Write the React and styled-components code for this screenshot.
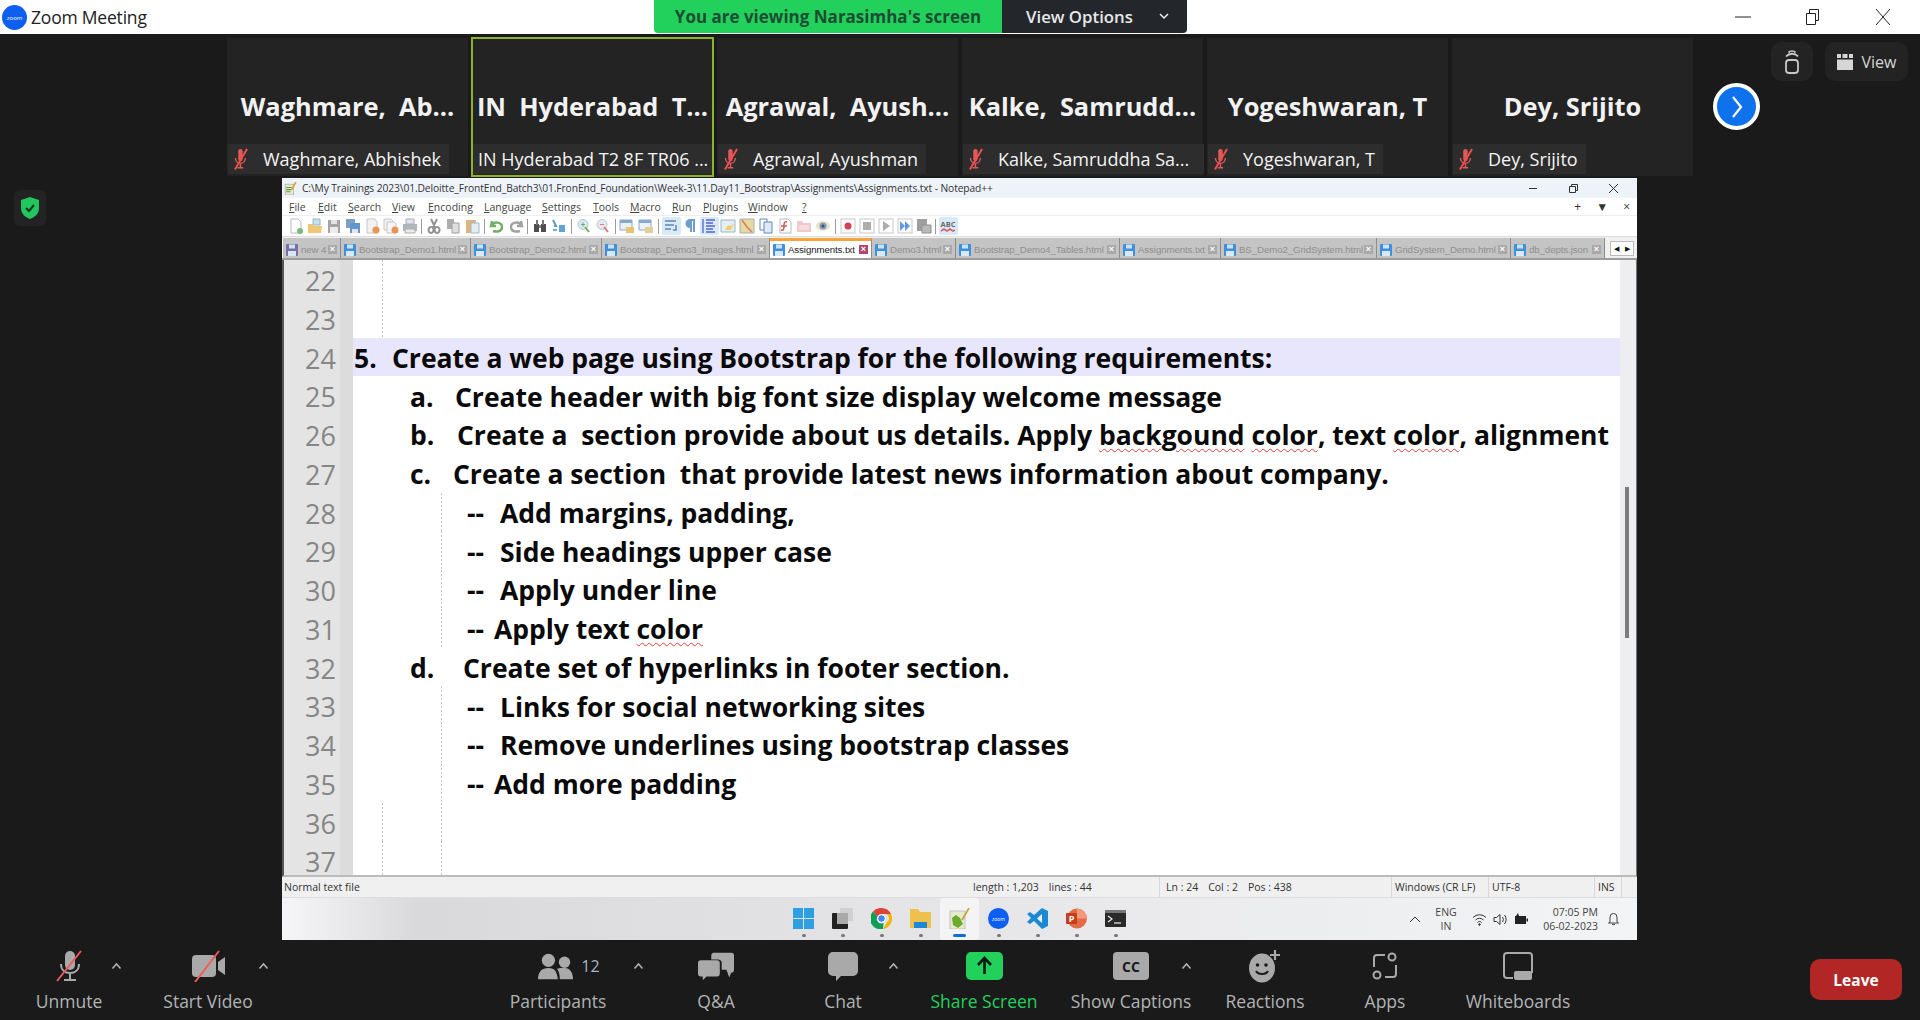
import React from 'react';
import styled, { createGlobalStyle } from 'styled-components';

const GlobalStyle = createGlobalStyle`
  html, body { margin: 0; padding: 0; background: #1a1a1a; }
  body { font-family: "Open Sans", "Noto Sans", sans-serif; overflow: hidden; }
  * { box-sizing: border-box; }
`;

const Page = styled.div`
  width: 1920px;
  height: 1020px;
  display: flex;
  flex-direction: column;
  background: #1a1a1a;
  position: relative;
  overflow: hidden;
`;

/* zoom title bar */
const TitleBar = styled.div`
  height: 34px;
  background: #fff;
  display: flex;
  align-items: center;
  padding-left: 2px;
  position: relative;
  flex: none;
`;
const AppName = styled.span`
  font-size: 17.5px;
  color: #222;
  margin-left: 4px;
  letter-spacing: -0.2px;
`;
const WinButtons = styled.div`
  margin-left: auto;
  display: flex;
  align-items: center;
  gap: 54px;
  padding-right: 29px;
`;
const Banner = styled.div`
  position: absolute;
  left: 654px;
  top: 0;
  height: 33px;
  display: flex;
  border-radius: 0 0 4px 4px;
  overflow: hidden;
`;
const BannerGreen = styled.div`
  width: 348px;
  background: #22d15c;
  color: #1d4d33;
  font-size: 17px;
  font-weight: 700;
  display: flex;
  align-items: center;
  justify-content: center;
`;
const BannerDark = styled.div`
  width: 185px;
  background: #23262b;
  color: #e8e8e8;
  font-size: 16.8px;
  font-weight: 600;
  display: flex;
  align-items: center;
  padding-left: 24px;
  gap: 26px;
`;

/* video strip */
const Strip = styled.div`
  height: 144px;
  flex: none;
  padding: 4px 0 2px 227px;
  display: flex;
  gap: 4px;
  position: relative;
`;
const Tile = styled.div`
  width: 241px;
  background: #232323;
  position: relative;
  display: flex;
  flex-direction: column;
  align-items: center;
  outline: ${(p) => (p.$active ? '2px solid #8db32c' : 'none')};
  outline-offset: -1px;
`;
const TileName = styled.div`
  flex: 1;
  display: flex;
  align-items: center;
  padding-top: 30px;
  color: #f2f2f2;
  font-size: 25.4px;
  font-weight: 700;
  white-space: pre;
`;
const NameTag = styled.div`
  align-self: flex-start;
  height: 30px;
  width: ${(p) => (p.$full ? '100%' : 'auto')};
  margin: 0 0 2px 1px;
  padding: 0 8px 0 5px;
  background: #2d2d2d;
  color: #f4f4f4;
  font-size: 18px;
  display: flex;
  align-items: center;
  gap: 14px;
  white-space: pre;
`;
const NextBtn = styled.div`
  width: 47px;
  height: 47px;
  border-radius: 50%;
  background: #0e72ed;
  border: 4px solid #fff;
  margin: 45px 0 0 16px;
  display: flex;
  align-items: center;
  justify-content: center;
`;
const ImmersiveBtn = styled.div`
  position: absolute;
  left: 1771px;
  top: 8px;
  width: 42px;
  height: 39px;
  border-radius: 10px;
  background: #232323;
  display: flex;
  align-items: center;
  justify-content: center;
`;
const ViewBtn = styled.div`
  position: absolute;
  left: 1825px;
  top: 8px;
  width: 83px;
  height: 39px;
  border-radius: 10px;
  background: #232323;
  color: #d6d6d6;
  font-size: 16px;
  display: flex;
  align-items: center;
  justify-content: center;
  gap: 9px;
`;

/* shared screen */
const Stage = styled.div`
  flex: 1;
  min-height: 0;
  padding-left: 282px;
  position: relative;
`;
const Shield = styled.div`
  position: absolute;
  left: 14px;
  top: 12px;
  width: 32px;
  height: 36px;
  background: #232323;
  border-radius: 6px;
  display: flex;
  align-items: center;
  justify-content: center;
`;
const Window = styled.div`
  width: 1355px;
  height: 762px;
  display: flex;
  flex-direction: column;
  background: #fff;
`;
const NpTitle = styled.div`
  height: 20px;
  flex: none;
  background: #eef2f9;
  display: flex;
  align-items: center;
  padding: 0 19px 0 2px;
  font-size: 10.25px;
  color: #333;
`;
const NpTitleText = styled.span`
  margin-left: 5px;
  letter-spacing: -0.1px;
`;
const NpControls = styled.div`
  margin-left: auto;
  display: flex;
  align-items: center;
  gap: 31px;
`;
const MenuRow = styled.div`
  height: 17px;
  flex: none;
  background: #fff;
  display: flex;
  align-items: center;
  padding-left: 7px;
  font-size: 10.5px;
  color: #444;
`;
const MenuItem = styled.span`
  width: ${(p) => p.$w}px;
  flex: none;
`;
const MenuRight = styled.div`
  margin-left: auto;
  display: flex;
  align-items: center;
  gap: 15px;
  padding-right: 7px;
  color: #333;
  font-size: 12px;
`;
const ToolRow = styled.div`
  height: 22px;
  flex: none;
  background: #fff;
  border-top: 1px solid #eee;
  border-bottom: 1px solid #ddd;
  display: flex;
  align-items: center;
  padding-left: 4px;
`;
const ToolBtn = styled.div`
  width: 19px;
  height: 18px;
  flex: none;
  display: flex;
  align-items: center;
  justify-content: center;
  border-radius: 2px;
  background: ${(p) => (p.$on ? '#cfe4f7' : 'transparent')};
  opacity: 0.8;
`;
const ToolSep = styled.div`
  width: 1px;
  height: 15px;
  background: #999;
  margin: 0 2.3px;
  flex: none;
`;
const TabRow = styled.div`
  height: 23px;
  flex: none;
  background: #f0f0f0;
  border-bottom: 2px solid #9c9c9c;
  display: flex;
  align-items: flex-end;
  padding-left: 1px;
`;
const Tab = styled.div`
  width: ${(p) => p.$w}px;
  flex: none;
  height: 20px;
  background: ${(p) => (p.$active ? '#fff' : '#c4c4c4')};
  border-top: ${(p) => (p.$active ? '3px solid #f5a33c' : 'none')};
  border-right: 1px solid #8d8d8d;
  color: ${(p) => (p.$active ? '#222' : '#8f8f8f')};
  font-family: "Liberation Sans", Arial, sans-serif;
  font-size: 9.7px;
  display: flex;
  align-items: center;
  padding: ${(p) => (p.$active ? '0 3px 0 3px' : '3px 3px 0 3px')};
  gap: 3px;
  white-space: nowrap;
  overflow: hidden;
`;
const TabLabel = styled.span`
  flex: 1;
  min-width: 0;
  letter-spacing: -0.1px;
`;
const TabX = styled.span`
  width: 9px;
  height: 9px;
  flex: none;
  background: ${(p) => (p.$active ? '#b0476e' : '#a9a9a9')};
  color: #fff;
  font-size: 9px;
  line-height: 9px;
  text-align: center;
  font-weight: 700;
`;
const TabArrows = styled.div`
  margin: 0 0 2px 5px;
  width: 24px;
  height: 15px;
  background: #fff;
  border: 1px solid #bbb;
  display: flex;
  align-items: center;
  justify-content: space-around;
  font-size: 7px;
  color: #111;
`;
const EditorWrap = styled.div`
  flex: none;
  height: 617px;
  display: flex;
  border-left: 2px solid #555;
  border-right: 1px solid #777;
  border-bottom: 2px solid #bbb;
  overflow: hidden;
`;
const Editor = styled.div`
  flex: 1;
  min-width: 0;
  overflow: hidden;
`;
const Row = styled.div`
  height: 38.75px;
  display: flex;
  background: ${(p) => (p.$hi ? '#e8e6fc' : '#fff')};
  align-items: center;
`;
const Gutter = styled.div`
  width: 56px;
  height: 100%;
  flex: none;
  background: #e4e4e4;
  color: #868686;
  font-size: 27px;
  text-align: right;
  padding: 2px 4px 0 0;
  line-height: 38.75px;
`;
const Fold = styled.div`
  width: 13px;
  height: 100%;
  flex: none;
  background: #dcdcdc;
`;
const Code = styled.div`
  flex: 1;
  height: 100%;
  display: flex;
  align-items: center;
  padding: 2px 0 0 ${(p) => p.$indent}px;
  color: #0a0a0a;
  font-size: 26.5px;
  font-weight: 700;
  letter-spacing: -0.02px;
  white-space: pre;
  background-repeat: repeat-y;
  background-size: 1px 4px;
  background-image: ${(p) =>
    (p.$guides || []).map(() => 'linear-gradient(#c6c6c6 50%, transparent 50%)').join(',') || 'none'};
  background-position: ${(p) => (p.$guides || []).map((g) => `${g}px 0`).join(',') || '0 0'};
`;
const Marker = styled.span`
  width: ${(p) => p.$w}px;
  flex: none;
`;
const Squiggle = styled.span`
  text-decoration: underline wavy #e23d3d 1px;
  text-underline-offset: 3px;
`;
const ScrollTrack = styled.div`
  width: 16px;
  flex: none;
  background: #eeeef0;
  padding: 227px 5px 0;
`;
const ScrollThumb = styled.div`
  width: 4px;
  height: 151px;
  background: #7c7c7c;
`;
const StatusBar = styled.div`
  height: 21px;
  flex: none;
  background: #f0f0f0;
  border-bottom: 1px solid #ddd;
  display: flex;
  align-items: center;
  font-size: 10.5px;
  color: #333;
`;
const StatusCell = styled.div`
  width: ${(p) => p.$w}px;
  flex: none;
  height: 100%;
  display: flex;
  align-items: center;
  padding-left: ${(p) => p.$pad || 3}px;
  gap: ${(p) => p.$gap || 0}px;
  border-right: ${(p) => (p.$line ? '1px solid #d8d8d8' : 'none')};
  white-space: pre;
`;
const Taskbar = styled.div`
  flex: none;
  height: 42px;
  display: flex;
  align-items: flex-start;
  padding-left: 502px;
  background: linear-gradient(90deg, #f6f6f8 0%, #d9d9db 10%, #e9e9eb 60%, #eff0f2 85%, #f3f4f6 100%);
  position: relative;
`;
const TaskSlot = styled.div`
  width: 39px;
  height: 42px;
  flex: none;
  display: flex;
  flex-direction: column;
  align-items: center;
  padding-top: 10px;
  gap: 5px;
  position: relative;
  background: ${(p) => (p.$on ? 'rgba(255,255,255,0.55)' : 'transparent')};
  border-radius: 4px;
`;
const TaskDot = styled.div`
  width: ${(p) => (p.$on ? '13px' : '4px')};
  height: 3px;
  border-radius: 2px;
  background: ${(p) => (p.$on ? '#0b6fd6' : '#777')};
`;
const Tray = styled.div`
  position: absolute;
  left: 1127px;
  top: 0;
  height: 100%;
  display: flex;
  align-items: center;
  color: #444;
  font-size: 10.5px;
`;
const TrayLang = styled.div`
  width: 34px;
  text-align: center;
  line-height: 14px;
  margin: 0 9px 0 8px;
`;
const TrayIcons = styled.div`
  display: flex;
  align-items: center;
  gap: 6px;
  width: 63px;
`;
const TrayClock = styled.div`
  width: 60px;
  margin-left: 3px;
  text-align: right;
  line-height: 14.5px;
  margin-right: 9px;
`;

/* bottom toolbar */
const Toolbar = styled.div`
  height: 80px;
  flex: none;
  display: flex;
  align-items: flex-start;
  padding: 12px 18px 0 30px;
`;
const Tool = styled.div`
  width: ${(p) => p.$w}px;
  margin-left: ${(p) => p.$gap || 0}px;
  flex: none;
  display: flex;
  flex-direction: column;
  align-items: center;
`;
const ToolIcon = styled.div`
  height: 28px;
  display: flex;
  align-items: center;
  justify-content: center;
  gap: 7px;
  padding-left: ${(p) => p.$nudge || 0}px;
  color: #a8b4c0;
  font-size: 16px;
`;
const ToolLabel = styled.div`
  margin-top: 9px;
  font-size: 17.5px;
  line-height: 24px;
  color: ${(p) => (p.$green ? '#22d15c' : '#b1b3b5')};
  white-space: nowrap;
`;
const Caret = styled.div`
  width: 16px;
  height: 28px;
  flex: none;
  display: flex;
  align-items: center;
  justify-content: center;
`;
const LeaveBtn = styled.div`
  margin: 7px 0 0 auto;
  width: 92px;
  height: 41px;
  border-radius: 10px;
  background: #b32626;
  color: #fff;
  font-size: 15.5px;
  font-weight: 700;
  display: flex;
  align-items: center;
  justify-content: center;
`;

/* icons */
const ZoomLogo = ({ size = 25 }) => (
  <svg width={size} height={size} viewBox="0 0 25 25">
    <circle cx="12.5" cy="12.5" r="12.5" fill="#0e5ff0" />
    <text x="12.5" y="15" textAnchor="middle" fontSize="6" fill="#fff" fontFamily="Open Sans">zoom</text>
  </svg>
);
const MutedMic = () => (
  <svg width="16" height="22" viewBox="0 0 14 20">
    <rect x="4.5" y="1" width="4" height="11" rx="2" fill="#e05a5a" />
    <path d="M2 9c0 3 2 5 4.500 5s4.500-2 4.500-5M6.500 14v4M4 18h5" stroke="#e05a5a" strokeWidth="1.300" fill="none" />
    <path d="M1.500 19.500L12.500 1" stroke="#f04f4f" strokeWidth="1.800" />
  </svg>
);
const TinyCaret = () => (
  <svg width="11" height="8" viewBox="0 0 11 8">
    <path d="M1.500 6.500L5.500 2l4 4.500" stroke="#b5b5b5" strokeWidth="1.500" fill="none" />
  </svg>
);

const TOOL_ICONS = {
  new: <><path d="M3 1h7l3 3v11H3z" fill="#fff" stroke="#aaa" /><circle cx="12" cy="13" r="3" fill="#5aa85a" /></>,
  open: <><path d="M6 1h7v6H6z" fill="#bcd4ee" stroke="#7aa" /><path d="M1 6h5l1 2h8l-1 7H1z" fill="#edb754" /></>,
  save: <><path d="M2 2h12v13H2z" fill="#8e8e8e" /><path d="M5 2h6v4H5z" fill="#ddd" /><path d="M4 9h8v6H4z" fill="#e8e8e8" /></>,
  saveAll: <><path d="M1 1h9v9H1z" fill="#5d88b5" /><path d="M5 5h10v10H5z" fill="#3d7cc0" /><path d="M7 11h6v4H7z" fill="#dde" /></>,
  close: <><path d="M3 1h8l2 3v11H3z" fill="#eee" stroke="#bbb" /><circle cx="12" cy="12" r="3.500" fill="#e37a2a" /></>,
  closeAll: <><path d="M1 1h7l2 2v9H1z" fill="#eee" stroke="#bbb" /><path d="M4 4h7l2 2v9H4z" fill="#f3f3f3" stroke="#bbb" /><circle cx="12" cy="12" r="3.500" fill="#e37a2a" /></>,
  print: <><path d="M4 1h8v5H4z" fill="#dde" stroke="#999" /><path d="M1 6h14v7H1z" fill="#9aa3ad" /><path d="M3 11h10v4H3z" fill="#e6e6e6" stroke="#999" /></>,
  cut: <path d="M5 1l4 8M11 1L7 9M5 9a2.500 3 0 1 0 .1 0M11 9a2.500 3 0 1 0 .1 0" stroke="#777" strokeWidth="2" fill="none" />,
  copy: <><path d="M2 1h7v10H2z" fill="#999" /><path d="M7 5h7v10H7z" fill="#d6d6d6" stroke="#888" /></>,
  paste: <><path d="M2 2h10v13H2z" fill="#d8a25e" /><path d="M7 5h8v10H7z" fill="#dfe9f5" stroke="#8aa" /></>,
  undo: <path d="M3 3l-1 5 5 0M3 7c2-4 10-3 10 2s-6 5-9 4" stroke="#4f9d3d" strokeWidth="2.400" fill="none" />,
  redo: <path d="M13 3l1 5-5 0M13 7c-2-4-10-3-10 2s6 5 9 4" stroke="#8a8a8a" strokeWidth="2.400" fill="none" />,
  find: <><path d="M2 6h5v8H2zM9 6h5v8H9z" fill="#222" /><path d="M4 2h2v5H4zM10 2h2v5h-2z" fill="#555" /><path d="M7 7h2v3H7z" fill="#666" /></>,
  replace: <><path d="M2 2l3 6h-2" stroke="#3d7cc0" strokeWidth="2" fill="none" /><path d="M8 7h6v7H8z" fill="#3d8cd0" /><path d="M2 12h4" stroke="#4a9" strokeWidth="2" /></>,
  zoomIn: <><circle cx="7" cy="6.500" r="5" fill="#cfe3f2" stroke="#9bb" /><path d="M9 9l4 5" stroke="#4f9d3d" strokeWidth="2" /><path d="M5 6.500h4M7 4.500v4" stroke="#4f9d3d" /></>,
  zoomOut: <><circle cx="7" cy="6.500" r="5" fill="#dfe3ee" stroke="#abb" /><path d="M9 9l4 5" stroke="#d65a5a" strokeWidth="2" /><path d="M5 6.500h4" stroke="#d65a5a" /></>,
  syncV: <><path d="M1 2h12v10H1z" fill="#e8eef6" stroke="#6a93c4" /><path d="M1 2h12v3H1z" fill="#6a93c4" /><rect x="7" y="9" width="8" height="6" fill="#e0b64f" /></>,
  syncH: <><path d="M1 2h12v10H1z" fill="#e8eef6" stroke="#6a93c4" /><path d="M1 2h12v3H1z" fill="#6a93c4" /><rect x="7" y="9" width="8" height="6" fill="#d9c27a" /></>,
  wrap: <path d="M2 3h11M2 7h9M2 11h6M13 7v5h-3" stroke="#3a6aa5" strokeWidth="1.500" fill="none" />,
  pilcrow: <path d="M7 2h6M9 2v12M12 2v12M8 2a3.500 3.500 0 0 0 0 7h1" stroke="#4a86c5" strokeWidth="2" fill="#4a86c5" />,
  indent: <path d="M5 2h9M5 5h7M5 8h9M5 11h7M5 14h9M2 1v14" stroke="#2a3bd0" strokeWidth="1.300" fill="none" />,
  fold: <><path d="M1 2h14v12H1z" fill="#dfeaf6" stroke="#7aa" /><path d="M5 12l3-5 3 1 3-3-3 7z" fill="#ecc23f" /></>,
  map: <><path d="M1 1h14v14H1z" fill="#dcd28a" stroke="#999" /><path d="M3 2l5 7 5 5" stroke="#d35a3a" strokeWidth="1.500" fill="none" /></>,
  docs: <><path d="M2 1h7v11H2z" fill="#fff" stroke="#3d6fa8" /><path d="M6 4h8v11H6z" fill="#d7e6f5" stroke="#3d6fa8" /></>,
  func: <><path d="M3 1h8l3 3v11H3z" fill="#fff" stroke="#aaa" /><path d="M10 4c-3-1-3 2-3 4s0 5-3 4M4 8h6" stroke="#c8322a" strokeWidth="1.500" fill="none" /></>,
  pink: <><path d="M1 3h5l1 2h8v9H1z" fill="#eebcc0" /><path d="M3 7h10v5H3z" fill="#f5d4d6" /></>,
  eye: <><ellipse cx="8" cy="8" rx="7" ry="5" fill="#e8dcb8" /><circle cx="8" cy="8" r="3.500" fill="#5a86b5" /><circle cx="8" cy="8" r="1.500" fill="#223" /></>,
  rec: <><rect x="1" y="1" width="14" height="14" fill="#fff" stroke="#bbb" /><circle cx="8" cy="8" r="3.500" fill="#d01020" /></>,
  stop: <><rect x="1" y="1" width="14" height="14" fill="#fff" stroke="#bbb" /><rect x="4" y="4" width="8" height="8" fill="#999" /></>,
  play: <><rect x="1" y="1" width="14" height="14" fill="#fff" stroke="#bbb" /><path d="M5 3l7 5-7 5z" fill="#999" /></>,
  ff: <><rect x="1" y="1" width="14" height="14" fill="#fff" stroke="#bbb" /><path d="M3 3l5 5-5 5zM8 3l5 5-5 5z" fill="#3d7fe0" /></>,
  saveMacro: <><path d="M1 1h10v12H1z" fill="#888" /><path d="M6 7h9v8H6z" fill="#aaa" stroke="#777" /></>,
  abc: <><text x="8" y="9" textAnchor="middle" fontSize="7.500" fontWeight="700" fill="#444" fontFamily="Open Sans">ABC</text><path d="M1 13l3-2 3 2 3-2 3 2 2-1" stroke="#d83a3a" strokeWidth="1.600" fill="none" /></>,
};

const TbIcon = ({ name }) => (
  <svg width="16" height="16" viewBox="0 0 16 16">{TOOL_ICONS[name]}</svg>
);

const FloppyTab = ({ grey }) => (
  <svg width="12" height="12" viewBox="0 0 12 12" style={{ flex: 'none' }}>
    <rect width="12" height="12" rx="1" fill={grey ? '#7a6ea5' : '#3f8fdc'} />
    <rect x="3" y="0.500" width="6" height="4" fill="#cfe2f5" />
    <rect x="2" y="7" width="8" height="5" fill="#d9e8f5" />
  </svg>
);

const NotepadIcon = ({ size = 13 }) => (
  <svg width={size} height={size} viewBox="0 0 12 12">
    <rect x="1" y="2" width="8" height="10" fill="#e8e8cf" stroke="#999" strokeWidth="0.500" />
    <path d="M2 5h5M2 7h5M2 9h4" stroke="#5a9a3a" />
    <path d="M11 0L7 7" stroke="#d8a030" strokeWidth="1.500" />
  </svg>
);

const toolbarGroups = [
  ['new', 'open', 'save', 'saveAll', 'close', 'closeAll', 'print'],
  ['cut', 'copy', 'paste'],
  ['undo', 'redo'],
  ['find', 'replace'],
  ['zoomIn', 'zoomOut'],
  ['syncV', 'syncH'],
  ['wrap', 'pilcrow', 'indent', 'fold', 'map', 'docs', 'func', 'pink', 'eye'],
  ['rec', 'stop', 'play', 'ff', 'saveMacro'],
  ['abc'],
];
const onButtons = ['wrap', 'indent', 'abc'];

const menus = [
  ['F', 'ile', 29], ['E', 'dit', 30], ['S', 'earch', 44], ['V', 'iew', 36], ['En', 'coding', 56],
  ['L', 'anguage', 58], ['Se', 'ttings', 51], ['T', 'ools', 37], ['M', 'acro', 42], ['R', 'un', 31],
  ['P', 'lugins', 45], ['W', 'indow', 54], ['?', '', 12],
];

const tabs = [
  ['new 4', 58, 'grey'], ['Bootstrap_Demo1.html', 130], ['Bootstrap_Demo2.html', 131],
  ['Bootstrap_Demo3_Images.html', 168], ['Assignments.txt', 102, 'active'], ['Demo3.html', 84],
  ['Bootstrap_Demo4_Tables.html', 164], ['Assignments.txt', 101], ['BS_Demo2_GridSystem.html', 156],
  ['GridSystem_Demo.html', 134], ['db_depts.json', 94],
];

const participants = [
  { name: 'Waghmare,  Ab...', tag: 'Waghmare, Abhishek', muted: true },
  { name: 'IN  Hyderabad  T...', tag: 'IN Hyderabad T2 8F TR06 ...', active: true },
  { name: 'Agrawal,  Ayush...', tag: 'Agrawal, Ayushman', muted: true },
  { name: 'Kalke,  Samrudd...', tag: 'Kalke, Samruddha Sa...', muted: true, full: true },
  { name: 'Yogeshwaran, T', tag: 'Yogeshwaran, T', muted: true },
  { name: 'Dey, Srijito', tag: 'Dey, Srijito', muted: true },
];

const S = Squiggle;
const lines = [
  { n: 22, guides: [29] },
  { n: 23, guides: [29] },
  { n: 24, hi: true, indent: 1, mark: '5.', w: 38, text: 'Create a web page using Bootstrap for the following requirements:' },
  { n: 25, indent: 57, mark: 'a.', w: 45, text: 'Create header with big font size display welcome message' },
  { n: 26, indent: 57, mark: 'b.', w: 47, text: <>Create a  section provide about us details. Apply <S>backgound</S> <S>color</S>, text <S>color</S>, alignment</> },
  { n: 27, indent: 57, mark: 'c.', w: 43, text: 'Create a section  that provide latest news information about company.' },
  { n: 28, indent: 114, mark: '--', w: 33, guides: [88], text: 'Add margins, padding,' },
  { n: 29, indent: 114, mark: '--', w: 33, guides: [88], text: 'Side headings upper case' },
  { n: 30, indent: 114, mark: '--', w: 33, guides: [88], text: 'Apply under line' },
  { n: 31, indent: 114, mark: '--', w: 27, guides: [88], text: <>Apply text <S>color</S></> },
  { n: 32, indent: 57, mark: 'd.', w: 53, text: 'Create set of hyperlinks in footer section.' },
  { n: 33, indent: 114, mark: '--', w: 33, guides: [88], text: 'Links for social networking sites' },
  { n: 34, indent: 114, mark: '--', w: 33, guides: [88], text: 'Remove underlines using bootstrap classes' },
  { n: 35, indent: 114, mark: '--', w: 27, guides: [88], text: 'Add more padding' },
  { n: 36, guides: [29, 88] },
  { n: 37, guides: [29, 88] },
];

const TaskIcon = ({ name }) => {
  switch (name) {
    case 'win':
      return (
        <svg width="21" height="21" viewBox="0 0 21 21">
          <path d="M0 0h10v10H0zM11 0h10v10H11zM0 11h10v10H0zM11 11h10v10H11z" fill="#2e9fe0" />
        </svg>
      );
    case 'snap':
      return (
        <svg width="21" height="21" viewBox="0 0 21 21">
          <rect x="8" y="0" width="13" height="13" fill="#d0d0d0" />
          <rect x="0" y="5" width="16" height="16" rx="1" fill="#222" />
          <rect x="5" y="5" width="11" height="11" fill="#aaa" />
        </svg>
      );
    case 'chrome':
      return (
        <svg width="21" height="21" viewBox="0 0 21 21">
          <path d="M10.500 0A10.500 10.500 0 0 1 20 6H10.500a4.500 4.500 0 0 0-4 2.500L2 3.500A10.500 10.500 0 0 1 10.500 0z" fill="#db4437" />
          <path d="M20 6a10.500 10.500 0 0 1-8 15l4-7a4.500 4.500 0 0 0-1-8z" fill="#f4b400" />
          <path d="M2 3.500l4.500 5a4.500 4.500 0 0 0 6 6.300L12 21A10.500 10.500 0 0 1 2 3.500z" fill="#0f9d58" />
          <circle cx="10.500" cy="10.500" r="3.800" fill="#4285f4" stroke="#fff" />
        </svg>
      );
    case 'folder':
      return (
        <svg width="21" height="21" viewBox="0 0 21 21">
          <path d="M0 1h8l2 3h11v16H0z" fill="#eec04e" />
          <path d="M4 14h13v6H4z" fill="#1d86d6" />
        </svg>
      );
    case 'np':
      return (
        <svg width="21" height="21" viewBox="0 0 21 21">
          <rect x="1" y="3" width="15" height="18" fill="#e8ead0" stroke="#999" strokeWidth="0.500" />
          <path d="M3 10l4-3 4 3 3 6-5 4-5-3z" fill="#6aaa2c" />
          <path d="M20 0L13 12" stroke="#c9a24a" strokeWidth="1.800" />
        </svg>
      );
    case 'zoom':
      return <ZoomLogo size={21} />;
    case 'vscode':
      return (
        <svg width="21" height="21" viewBox="0 0 21 21">
          <path d="M15 0l6 3v15l-6 3-8-8-4 3-3-2 4-4-4-4 3-2 4 3z" fill="#1a8ad4" />
          <path d="M15 6l-5 4.500 5 4.500z" fill="#eef0f2" />
        </svg>
      );
    case 'ppt':
      return (
        <svg width="21" height="21" viewBox="0 0 21 21">
          <circle cx="11" cy="10.500" r="10" fill="#e46a4a" />
          <path d="M11 .5a10 10 0 0 1 10 10H11z" fill="#f09a7a" />
          <rect x="0" y="5" width="11" height="11" rx="1" fill="#c43e1c" />
          <text x="5.500" y="14" textAnchor="middle" fontSize="9" fontWeight="700" fill="#fff" fontFamily="Open Sans">P</text>
        </svg>
      );
    default:
      return (
        <svg width="21" height="21" viewBox="0 0 21 21">
          <rect y="2" width="21" height="17" rx="1" fill="#2a2a2a" />
          <rect y="2" width="21" height="3" fill="#777" />
          <path d="M3 8l4 3-4 3" stroke="#eee" fill="none" strokeWidth="1.200" />
          <path d="M9 15h7" stroke="#eee" strokeWidth="1.200" />
        </svg>
      );
  }
};
const taskIcons = ['win', 'snap', 'chrome', 'folder', 'np', 'zoom', 'vscode', 'ppt', 'term'];

const App = () => (
  <Page>
    <GlobalStyle />
    <TitleBar>
      <ZoomLogo />
      <AppName>Zoom Meeting</AppName>
      <WinButtons>
        <svg width="16" height="16" viewBox="0 0 16 16"><path d="M0 8h16" stroke="#222" /></svg>
        <svg width="16" height="16" viewBox="0 0 16 16" fill="none" stroke="#222"><path d="M1.500 4.500h9v11h-9zM4.500 4V.5h9v11H11" /></svg>
        <svg width="16" height="16" viewBox="0 0 16 16"><path d="M1 0l14 16M15 0L1 16" stroke="#222" /></svg>
      </WinButtons>
      <Banner>
        <BannerGreen>You are viewing Narasimha's screen</BannerGreen>
        <BannerDark>
          View Options
          <svg width="10" height="7" viewBox="0 0 10 7"><path d="M1 1l4 4 4-4" stroke="#eee" strokeWidth="1.500" fill="none" /></svg>
        </BannerDark>
      </Banner>
    </TitleBar>

    <Strip>
      {participants.map((p) => (
        <Tile key={p.tag} $active={p.active}>
          <TileName>{p.name}</TileName>
          <NameTag $full={p.active || p.full}>
            {p.muted && <MutedMic />}
            {p.tag}
          </NameTag>
        </Tile>
      ))}
      <NextBtn>
        <svg width="14" height="24" viewBox="0 0 14 24"><path d="M3 2l8 10-8 10" stroke="#fff" strokeWidth="2.200" fill="none" /></svg>
      </NextBtn>
      <ImmersiveBtn>
        <svg width="18" height="26" viewBox="0 0 18 26" fill="none" stroke="#c8c8c8" strokeWidth="1.800">
          <path d="M5.500 3.500a5 5 0 0 1 7 0M3 7.500a8 8 0 0 1 12-.1" />
          <rect x="3" y="11" width="12" height="13" rx="3" />
        </svg>
      </ImmersiveBtn>
      <ViewBtn>
        <svg width="16" height="16" viewBox="0 0 16 16" fill="#d6d6d6">
          <path d="M0 0h4v4H0zM5.500 0h5v4h-5zM12 0h4v4h-4zM0 5.500h16V16H0z" />
        </svg>
        View
      </ViewBtn>
    </Strip>

    <Stage>
      <Shield>
        <svg width="20" height="22" viewBox="0 0 20 22">
          <path d="M10 0l9 3v8c0 6-4 9-9 11-5-2-9-5-9-11V3z" fill="#22c55e" />
          <path d="M6 11l3 3 5-6" stroke="#11331f" strokeWidth="2" fill="none" />
        </svg>
      </Shield>
      <Window>
        <NpTitle>
          <NotepadIcon />
          <NpTitleText>C:\My Trainings 2023\01.Deloitte_FrontEnd_Batch3\01.FronEnd_Foundation\Week-3\11.Day11_Bootstrap\Assignments\Assignments.txt - Notepad++</NpTitleText>
          <NpControls>
            <svg width="9" height="9" viewBox="0 0 9 9"><path d="M0 4.500h8" stroke="#333" /></svg>
            <svg width="9" height="9" viewBox="0 0 9 9" fill="none" stroke="#333"><path d="M.5 2.500h6v6h-6zM2.500 2V.5h6v6H7" /></svg>
            <svg width="9" height="9" viewBox="0 0 9 9"><path d="M0 0l9 9M9 0L0 9" stroke="#333" /></svg>
          </NpControls>
        </NpTitle>
        <MenuRow>
          {menus.map(([u, rest, w]) => (
            <MenuItem key={u + rest} $w={w}>
              <u>{u.length > 1 ? u.slice(0, 1) : u}</u>{u.slice(1)}{rest}
            </MenuItem>
          ))}
          <MenuRight>
            <span>+</span>
            <span>▼</span>
            <span>×</span>
          </MenuRight>
        </MenuRow>
        <ToolRow>
          {toolbarGroups.map((group, i) => (
            <React.Fragment key={group[0]}>
              {i > 0 && <ToolSep />}
              {group.map((name) => (
                <ToolBtn key={name} $on={onButtons.includes(name)}>
                  <TbIcon name={name} />
                </ToolBtn>
              ))}
            </React.Fragment>
          ))}
        </ToolRow>
        <TabRow>
          {tabs.map(([label, w, kind], i) => (
            <Tab key={label + i} $w={w} $active={kind === 'active'}>
              <FloppyTab grey={kind === 'grey'} />
              <TabLabel>{label}</TabLabel>
              <TabX $active={kind === 'active'}>×</TabX>
            </Tab>
          ))}
          <TabArrows>
            <span>◀</span>
            <span>▶</span>
          </TabArrows>
        </TabRow>
        <EditorWrap>
          <Editor>
            {lines.map((l) => (
              <Row key={l.n} $hi={l.hi}>
                <Gutter>{l.n}</Gutter>
                <Fold />
                <Code $indent={l.indent || 0} $guides={l.guides}>
                  {l.mark && <Marker $w={l.w}>{l.mark}</Marker>}
                  {l.text && <span>{l.text}</span>}
                </Code>
              </Row>
            ))}
          </Editor>
          <ScrollTrack>
            <ScrollThumb />
          </ScrollTrack>
        </EditorWrap>
        <StatusBar>
          <StatusCell $w={688} $pad={2}>Normal text file</StatusCell>
          <StatusCell $w={190} $gap={10} $line>
            <span>length : 1,203</span>
            <span>lines : 44</span>
          </StatusCell>
          <StatusCell $w={232} $gap={10} $pad={6} $line>
            <span>Ln : 24</span>
            <span>Col : 2</span>
            <span>Pos : 438</span>
          </StatusCell>
          <StatusCell $w={97} $line>Windows (CR LF)</StatusCell>
          <StatusCell $w={106} $line>UTF-8</StatusCell>
          <StatusCell $w={27} $line>INS</StatusCell>
        </StatusBar>
        <Taskbar>
          {taskIcons.map((name) => (
            <TaskSlot key={name} $on={name === 'np'}>
              <TaskIcon name={name} />
              <TaskDot $on={name === 'np'} />
            </TaskSlot>
          ))}
          <Tray>
            <svg width="12" height="8" viewBox="0 0 12 8"><path d="M1 7l5-5 5 5" stroke="#333" fill="none" /></svg>
            <TrayLang>ENG<br />IN</TrayLang>
            <TrayIcons>
              <svg width="15" height="13" viewBox="0 0 15 13" fill="none" stroke="#333"><path d="M1 4.500a9 9 0 0 1 13 0M3.500 7a5.500 5.500 0 0 1 8 0M5.500 9.500a2.500 2.500 0 0 1 4 0" /><circle cx="7.500" cy="11.500" r=".8" fill="#333" /></svg>
              <svg width="15" height="13" viewBox="0 0 15 13" fill="none" stroke="#333"><path d="M1 4.500h2.500L7 1.500v10l-3.500-3H1zM9.500 4a4 4 0 0 1 0 5M11.500 2a7 7 0 0 1 0 9" /></svg>
              <svg width="15" height="13" viewBox="0 0 15 13" fill="#222"><path d="M1 3h11v8H1zM12.500 5.500H14v3h-1.500z" /><path d="M4 0L2 3h3z" /></svg>
            </TrayIcons>
            <TrayClock>07:05 PM<br />06-02-2023</TrayClock>
            <svg width="13" height="14" viewBox="0 0 13 14" fill="none" stroke="#444"><path d="M3 10V5a3.500 3.500 0 0 1 7 0v5l1.500 1h-10zM5 12.500h3" /></svg>
          </Tray>
        </Taskbar>
      </Window>
    </Stage>

    <Toolbar>
      <Tool $w={78}>
        <ToolIcon>
          <svg width="30" height="32" viewBox="0 0 30 32">
            <rect x="11" y="1" width="10" height="19" rx="5" fill="#a9a9a9" />
            <path d="M7 14c0 6 4 9 9 9s9-3 9-9M16 23v6M10 30h12" stroke="#a9a9a9" strokeWidth="2" fill="none" />
            <path d="M3 31L27 1" stroke="#f05a5a" strokeWidth="2" />
          </svg>
        </ToolIcon>
        <ToolLabel>Unmute</ToolLabel>
      </Tool>
      <Caret><TinyCaret /></Caret>
      <Tool $w={94} $gap={37}>
        <ToolIcon>
          <svg width="38" height="32" viewBox="0 0 38 32">
            <rect x="3" y="5" width="24" height="22" rx="4" fill="#a9a9a9" />
            <path d="M29 12l7-5v18l-7-5z" fill="#a9a9a9" />
            <path d="M6 32L30 1" stroke="#f05a5a" strokeWidth="2" />
          </svg>
        </ToolIcon>
        <ToolLabel>Start Video</ToolLabel>
      </Tool>
      <Caret><TinyCaret /></Caret>
      <Tool $w={144} $gap={215}>
        <ToolIcon $nudge={22}>
          <svg width="36" height="28" viewBox="0 0 38 28" fill="#a9a9a9">
            <circle cx="11" cy="8" r="7" />
            <circle cx="28" cy="10" r="6" />
            <path d="M0 28c0-8 4-12 11-12s9 4 10 12zM23 28c0-6-1-8-3-11 2-1 5-1 8-1 6 0 9 5 9 12z" />
          </svg>
          <span>12</span>
        </ToolIcon>
        <ToolLabel>Participants</ToolLabel>
      </Tool>
      <Caret><TinyCaret /></Caret>
      <Tool $w={70} $gap={35}>
        <ToolIcon>
          <svg width="36" height="29" viewBox="0 0 38 29" fill="#a9a9a9">
            <path d="M16 0h19a3 3 0 0 1 3 3v15a3 3 0 0 1-3 3l-2 5-3-8h-5V10a4 4 0 0 0-4-3h-7V3a3 3 0 0 1 2-3z" />
            <path d="M3 8h17a3 3 0 0 1 3 3v11a3 3 0 0 1-3 3H9l-4 4v-4H3a3 3 0 0 1-3-3V11a3 3 0 0 1 3-3z" />
          </svg>
        </ToolIcon>
        <ToolLabel>Q&amp;A</ToolLabel>
      </Tool>
      <Tool $w={84} $gap={50}>
        <ToolIcon>
          <svg width="30" height="29" viewBox="0 0 30 29" fill="#a9a9a9">
            <path d="M5 0h20a5 5 0 0 1 5 5v14a5 5 0 0 1-5 5H13l-5 5v-5H5a5 5 0 0 1-5-5V5a5 5 0 0 1 5-5z" />
          </svg>
        </ToolIcon>
        <ToolLabel>Chat</ToolLabel>
      </Tool>
      <Caret><TinyCaret /></Caret>
      <Tool $w={110} $gap={28}>
        <ToolIcon>
          <svg width="37" height="28" viewBox="0 0 37 28">
            <rect width="37" height="28" rx="5" fill="#22d15c" />
            <path d="M18.500 22V7M12 13l6.500-7 6.500 7" stroke="#0a1a0f" strokeWidth="2.600" fill="none" />
          </svg>
        </ToolIcon>
        <ToolLabel $green>Share Screen</ToolLabel>
      </Tool>
      <Tool $w={94} $gap={45}>
        <ToolIcon>
          <svg width="36" height="28" viewBox="0 0 36 28">
            <rect width="36" height="28" rx="4" fill="#a9a9a9" />
            <text x="18" y="19.500" textAnchor="middle" fontSize="14" fontWeight="700" fill="#1a1a1a" fontFamily="Open Sans">CC</text>
          </svg>
        </ToolIcon>
        <ToolLabel>Show Captions</ToolLabel>
      </Tool>
      <Caret><TinyCaret /></Caret>
      <Tool $w={90} $gap={26}>
        <ToolIcon>
          <svg width="34" height="34" viewBox="0 0 34 34">
            <ellipse cx="14" cy="19" rx="13" ry="14.500" fill="#a9a9a9" />
            <circle cx="9.500" cy="16" r="1.800" fill="#1a1a1a" />
            <circle cx="18" cy="16" r="1.800" fill="#1a1a1a" />
            <path d="M8 22c2 4 10 4 12 0" stroke="#1a1a1a" strokeWidth="2" fill="none" />
            <path d="M27 1v10M22 6h10" stroke="#a9a9a9" strokeWidth="2.200" />
          </svg>
        </ToolIcon>
        <ToolLabel>Reactions</ToolLabel>
      </Tool>
      <Tool $w={70} $gap={40}>
        <ToolIcon>
          <svg width="26" height="28" viewBox="0 0 26 28" fill="none" stroke="#a9a9a9" strokeWidth="2">
            <circle cx="20" cy="5" r="3.500" />
            <circle cx="5" cy="23" r="3.500" />
            <path d="M13 3H5a3 3 0 0 0-3 3v9M13 25h8a3 3 0 0 0 3-3v-9" />
          </svg>
        </ToolIcon>
        <ToolLabel>Apps</ToolLabel>
      </Tool>
      <Tool $w={110} $gap={43}>
        <ToolIcon>
          <svg width="30" height="28" viewBox="0 0 30 28">
            <path d="M10 26H4a3 3 0 0 1-3-3V4a3 3 0 0 1 3-3h22a3 3 0 0 1 3 3v17" stroke="#a9a9a9" strokeWidth="2" fill="none" />
            <rect x="11" y="19" width="18" height="9" rx="2" fill="#a9a9a9" />
          </svg>
        </ToolIcon>
        <ToolLabel>Whiteboards</ToolLabel>
      </Tool>
      <LeaveBtn>Leave</LeaveBtn>
    </Toolbar>
  </Page>
);

export default App;
